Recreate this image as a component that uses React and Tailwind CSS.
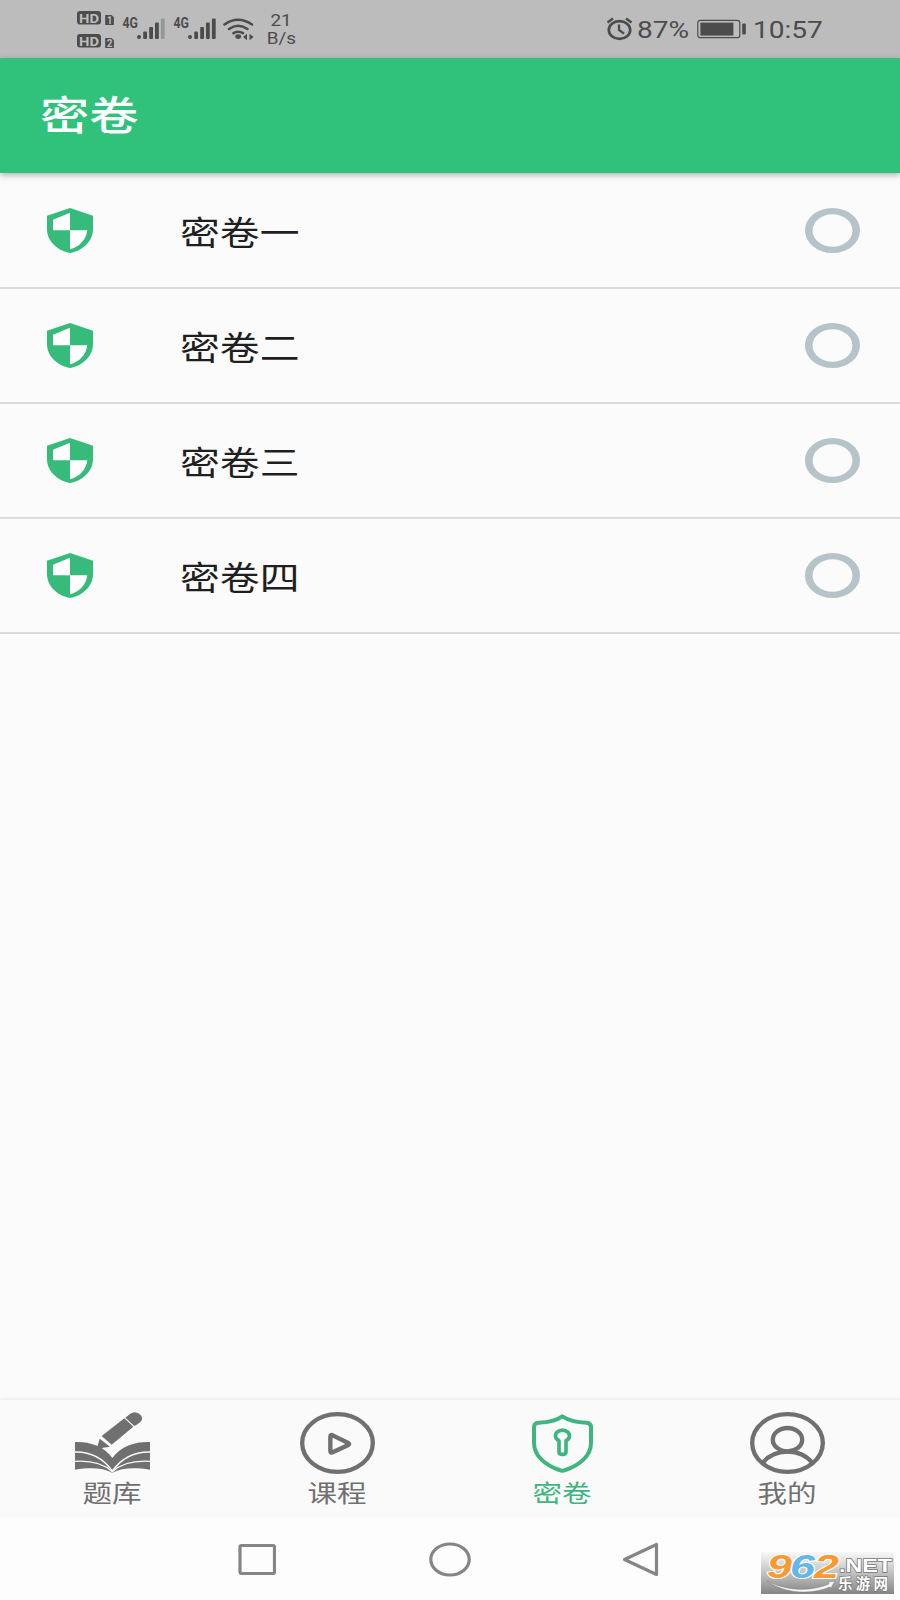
/**
 * App.jsx
 * -------
 * Secret papers list with the status bar, tab bar and system navigation.
 */
import clsx from 'clsx'

const PAPERS = ['密卷一', '密卷二', '密卷三', '密卷四']

const TABS = [
  { label: '题库', Icon: BookIcon },
  { label: '课程', Icon: CourseIcon },
  { label: '密卷', Icon: LockShieldIcon, active: true },
  { label: '我的', Icon: ProfileIcon },
]

export default function App() {
  return (
    <div className="w-[900px] h-[1600px] flex flex-col bg-[#fbfbfb] overflow-hidden font-['Noto_Sans_CJK_SC',sans-serif]">
      <StatusBar />

      <header className="relative h-[115px] shrink-0 flex items-center pl-[40px] pb-[5px] bg-[#30c27b] shadow-[0_2px_6px_rgba(0,0,0,0.3)]">
        <h1 className="text-[40px] leading-none font-medium text-white origin-left scale-x-[1.23]">密卷</h1>
      </header>

      <main className="flex-1 pt-px">
        {PAPERS.map((name) => <PaperRow key={name} name={name} />)}
      </main>

      <nav className="h-[118px] shrink-0 grid grid-cols-4 bg-[#fafafa] shadow-[0_-1px_4px_rgba(0,0,0,0.08)]">
        {TABS.map(({ label, Icon, active }) => (
          <div key={label} className={clsx('flex flex-col items-center pt-3', active ? 'text-[#3fb57f]' : 'text-[#707070]')}>
            <Icon />
            <span className="mt-[5px] mr-px text-[24px] leading-[25px] scale-x-[1.23]">{label}</span>
          </div>
        ))}
      </nav>

      <SystemNav />
    </div>
  )
}

function StatusBar() {
  return (
    <div className="h-[58px] shrink-0 flex items-center bg-[#bcbcbc] text-[#4c4c4c] font-['Roboto',sans-serif]">
      <svg className="ml-[75px] shrink-0" width="182" height="58" viewBox="0 0 182 58" fill="currentColor">
        {/* SIM badges */}
        <HdBadge y={11} sim="1" />
        <HdBadge y={34} sim="2" />

        {/* Signal strength */}
        <Signal x={47} weak />
        <Signal x={98} />

        {/* Wifi */}
        <g fill="none" stroke="currentColor" strokeWidth="2.600" strokeLinecap="round">
          <path d="M149.500 24.500Q163 15 177 24.500" />
          <path d="M154 29Q163 22.500 172.500 29" />
          <path d="M158.500 33.200Q163 30.200 168 33.200" />
        </g>
        <ellipse cx="163.200" cy="36.600" rx="2.900" ry="2.400" />
        <path d="M168 37l4-3.200v6.400zM178.500 37l-4-3.200v6.400z" />
      </svg>

      <div className="ml-[9px] w-[30px] flex flex-col items-center text-[16px] leading-[18px] mt-[2px]">
        <span className="scale-x-[1.18]">21</span>
        <span className="scale-x-[1.18]">B/s</span>
      </div>

      <svg className="ml-[310px] shrink-0" width="27" height="24" viewBox="0 0 27 24" fill="none" stroke="currentColor" strokeWidth="2.700">
        <ellipse cx="13.500" cy="13" rx="10.700" ry="8.900" />
        <path d="M13 7.500V13L18 16.700" strokeWidth="2.300" />
        <path d="M1.500 5.500L7 1.500M25.500 5.500L20 1.500" strokeWidth="2.500" />
      </svg>
      <span className="ml-[4px] mt-[2px] w-[53px] text-[23px] leading-none origin-left scale-x-[1.22]">87%</span>
      <svg className="ml-[7px] shrink-0" width="50" height="20" viewBox="0 0 50 20" fill="currentColor">
        <rect x="0.800" y="1.300" width="42" height="17.400" rx="2.500" fill="none" stroke="currentColor" strokeWidth="1.200" />
        <rect x="3.400" y="3.600" width="33" height="13" />
        <rect x="45.200" y="4.500" width="3.600" height="11" rx="1" />
      </svg>
      <span className="ml-[6px] mt-[2px] text-[23px] leading-none origin-left scale-x-[1.22]">10:57</span>
    </div>
  )
}

function HdBadge({ y, sim }) {
  return (
    <g transform={`translate(0 ${y})`} fontFamily="Roboto, sans-serif" fontWeight="700">
      <rect x="2" y="0" width="24" height="13.500" rx="3" />
      <text x="4" y="11.600" fontSize="13.500" fill="#bcbcbc" textLength="20" lengthAdjust="spacingAndGlyphs">HD</text>
      <path d="M30.200 4H36.500L38.900 6.300V14H30.200Z" />
      <text x="31.700" y="12.700" fontSize="10" fill="#bcbcbc">{sim}</text>
    </g>
  )
}

function Signal({ x, weak }) {
  return (
    <g transform={`translate(${x} 0)`}>
      <text x="0.500" y="28" fontSize="14" fontWeight="700" fontFamily="Roboto, sans-serif" textLength="15.500" lengthAdjust="spacingAndGlyphs">4G</text>
      <ellipse cx="17" cy="37" rx="2" ry="2" />
      <rect x="21.200" y="31.500" width="3.800" height="7.500" rx="1" />
      <rect x="27.200" y="27" width="3.800" height="12" rx="1" />
      <rect x="33" y="22.500" width="3.800" height="16.500" rx="1" />
      <rect x="38.900" y="18.500" width="3.800" height="20.500" rx="1" fill={weak ? '#969696' : 'currentColor'} />
    </g>
  )
}

function PaperRow({ name }) {
  return (
    <div className="h-[115px] flex items-center border-b-2 border-[#dcdcdc] pl-[47px] pr-[40px]">
      <svg width="46" height="45" viewBox="0 0 46 45">
        <path fill="#36bb7b" d="M23 0L46 7.700V21C46 33 36 42.500 23 45C10 42.500 0 33 0 21V7.700Z" />
        <path fill="#fff" d="M23 4.700V22.300H6V11.700ZM23 22.300H40.300C39.300 31.500 32.500 39 23 41.300Z" />
      </svg>
      <span className="ml-[87px] mt-[2px] text-[32.500px] leading-none text-[#1f1f1f] origin-left scale-x-[1.225]">{name}</span>
      <svg className="ml-auto" width="55" height="45" viewBox="0 0 45 45" preserveAspectRatio="none">
        <circle cx="22.500" cy="22.500" r="19.400" fill="none" stroke="#b6c4c9" strokeWidth="6.200" />
      </svg>
    </div>
  )
}

function BookIcon() {
  return (
    <svg width="75" height="62" viewBox="0 0 225 186" fill="currentColor">
      <path d="M0 90C38 88 86 100 112 138C139 100 187 88 225 90V173C176 166 140 168 112 182C84 168 48 166 0 173Z" />
      <g fill="none" stroke="#fafafa" strokeWidth="4">
        <path d="M0 120C46 119 84 138 112 177C140 138 179 119 225 120" />
        <path d="M0 148C48 145 84 154 112 179C140 154 177 145 225 148" />
      </g>
      {/* Pen */}
      <path d="M74 80L105 104L84 107L74 116L60 113L68 101Z" />
      <path d="M80 75L109 100" fill="none" stroke="#fafafa" strokeWidth="3" />
      <path d="M80 72L148 19L175 44L110 98Z" />
      <path d="M151 17L166 5Q178-4 193 5Q206 16 199 26Q196 31 178 42Z" />
    </svg>
  )
}

function CourseIcon() {
  return (
    <svg width="75" height="62" viewBox="0 0 225 186" fill="none" stroke="currentColor">
      <ellipse cx="112.500" cy="93" rx="106" ry="86.500" strokeWidth="13" />
      <path d="M91 74Q91 67 98 70L145 93Q150 96 145 99L98 121Q91 124 91 117Z" strokeWidth="13" strokeLinejoin="round" />
    </svg>
  )
}

function LockShieldIcon() {
  return (
    <svg width="75" height="62" viewBox="0 0 225 186" fill="none" stroke="currentColor" strokeLinejoin="round">
      <path d="M112 13C95 25 70 31 41 32Q27 33 27 46V93C27 132 62 160 103 174Q112 178 121 174C163 160 198 132 198 93V46Q198 33 184 32C155 31 130 25 112 13Z" strokeWidth="12" />
      <path d="M102 86A21 17 0 1 1 123 86V119Q123 127 112.500 127Q102 127 102 119Z" strokeWidth="11" />
    </svg>
  )
}

function ProfileIcon() {
  return (
    <svg width="75" height="62" viewBox="0 0 225 186" fill="none" stroke="currentColor" strokeWidth="13">
      <ellipse cx="112.500" cy="93" rx="106" ry="86.500" />
      <ellipse cx="112.500" cy="83" rx="44" ry="35" />
      <path d="M38 153C56 130 84 119 112.500 119C141 119 169 130 187 153" />
    </svg>
  )
}

function SystemNav() {
  return (
    <div className="relative h-[82px] shrink-0 bg-[#fdfdfd]">
      <div className="flex items-center pt-[24px] pl-[238px]">
        <svg width="38" height="35" viewBox="0 0 38 35" fill="none" stroke="#858585" strokeWidth="3.200">
          <rect x="2" y="3.500" width="34.500" height="28" rx="1.500" />
        </svg>
        <svg className="ml-[153px]" width="42" height="35" viewBox="0 0 42 35" fill="none" stroke="#858585" strokeWidth="3.200">
          <ellipse cx="21" cy="17.500" rx="19.200" ry="15.500" />
        </svg>
        <svg className="ml-[151px]" width="37" height="35" viewBox="0 0 37 35" fill="none" stroke="#858585" strokeWidth="3.200" strokeLinejoin="round">
          <path d="M2.500 17.500L34.500 2.500V32.500Z" />
        </svg>
      </div>
      <SiteMark />
    </div>
  )
}

// Site badge lying over the bottom right corner
function SiteMark() {
  return (
    <svg className="absolute right-[6px] bottom-[6px] overflow-visible" width="133" height="42" viewBox="0 0 133 42">
      <defs>
        <linearGradient id="plate" x1="0" y1="0" x2="0" y2="1">
          <stop offset="0" stopColor="#f8f8f8" />
          <stop offset="0.500" stopColor="#c2c2c2" />
          <stop offset="1" stopColor="#858585" />
        </linearGradient>
      </defs>
      <rect width="133" height="42" fill="url(#plate)" />
      <path d="M6 29C28 40 51 39 68 32L67 30L74 29L70 36L69 35C50 43 24 42 6 29Z" fill="#f5f5f5" stroke="#777" strokeWidth="0.500" />
      <g fontFamily="'Liberation Sans', sans-serif" fontWeight="700" fontStyle="italic" fontSize="33" stroke="#fff" strokeWidth="2" paintOrder="stroke">
        <text x="6" y="25.500" fill="#f79a31" textLength="25" lengthAdjust="spacingAndGlyphs">9</text>
        <text x="29" y="25.500" fill="#63b8e8" textLength="25" lengthAdjust="spacingAndGlyphs">6</text>
        <text x="53" y="25.500" fill="#f79a31" textLength="25" lengthAdjust="spacingAndGlyphs">2</text>
      </g>
      <g fill="#fff" stroke="#777" strokeWidth="1.300" paintOrder="stroke" fontWeight="700">
        <text x="78" y="20" fontSize="18" fontFamily="'Liberation Sans', sans-serif" textLength="53" lengthAdjust="spacingAndGlyphs">.NET</text>
        <text x="77" y="37" fontSize="14.500" fontFamily="'Noto Sans CJK SC', sans-serif" textLength="50" lengthAdjust="spacing">乐游网</text>
      </g>
    </svg>
  )
}
